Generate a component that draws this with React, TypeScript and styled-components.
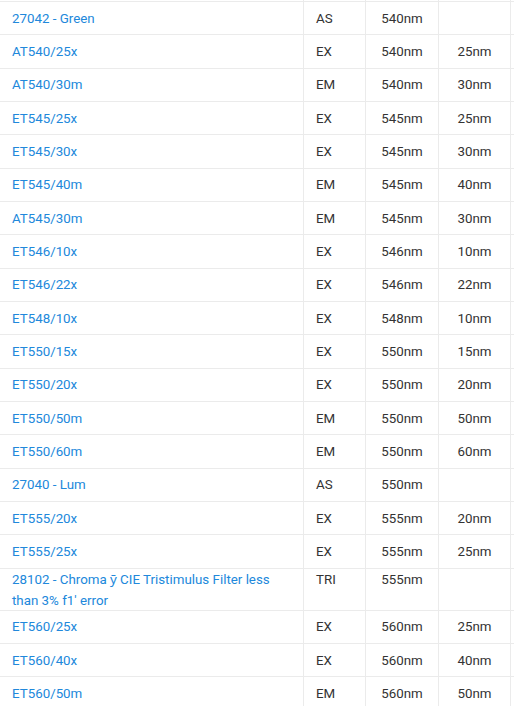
import React from "react";
import styled, { createGlobalStyle } from "styled-components";

const Global = createGlobalStyle`
  html, body { margin: 0; padding: 0; background: #fff; }
  body { font-family: Roboto, "Noto Sans", Arial, sans-serif; overflow: hidden; }
`;

const Table = styled.div`
  width: 514px;
  font-family: Roboto, "Noto Sans", Arial, sans-serif;
  font-size: 13.333px;
  line-height: 21px;
  color: #333;
`;

const Row = styled.div<{ $tall?: boolean; $stub?: boolean }>`
  display: grid;
  grid-template-columns: 304px 62px 73px 72px 1fr;
  box-sizing: border-box;
  height: ${(p) => (p.$stub ? "2px" : p.$tall ? "42px" : "33.333px")};
  border-bottom: 1px solid #ebebeb;
`;

const Cell = styled.div<{ $center?: boolean; $tall?: boolean }>`
  box-sizing: border-box;
  min-width: 0;
  display: flex;
  align-items: ${(p) => (p.$tall ? "flex-start" : "center")};
  justify-content: ${(p) => (p.$center ? "center" : "flex-start")};
  padding: ${(p) => (p.$center ? "0" : "0 12px")};
  padding-top: ${(p) => (p.$tall ? "0.5px" : "0")};
  border-right: 1px solid #ebebeb;
  white-space: ${(p) => (p.$center ? "nowrap" : "normal")};
`;

const Name = styled.a`
  color: #2188db;
  text-decoration: none;
  cursor: pointer;
`;

type Item = [string, string, string, string];

const rows: Item[] = [
  ["27042 - Green", "AS", "540nm", ""],
  ["AT540/25x", "EX", "540nm", "25nm"],
  ["AT540/30m", "EM", "540nm", "30nm"],
  ["ET545/25x", "EX", "545nm", "25nm"],
  ["ET545/30x", "EX", "545nm", "30nm"],
  ["ET545/40m", "EM", "545nm", "40nm"],
  ["AT545/30m", "EM", "545nm", "30nm"],
  ["ET546/10x", "EX", "546nm", "10nm"],
  ["ET546/22x", "EX", "546nm", "22nm"],
  ["ET548/10x", "EX", "548nm", "10nm"],
  ["ET550/15x", "EX", "550nm", "15nm"],
  ["ET550/20x", "EX", "550nm", "20nm"],
  ["ET550/50m", "EM", "550nm", "50nm"],
  ["ET550/60m", "EM", "550nm", "60nm"],
  ["27040 - Lum", "AS", "550nm", ""],
  ["ET555/20x", "EX", "555nm", "20nm"],
  ["ET555/25x", "EX", "555nm", "25nm"],
  ["28102 - Chroma ȳ CIE Tristimulus Filter less than 3% f1' error", "TRI", "555nm", ""],
  ["ET560/25x", "EX", "560nm", "25nm"],
  ["ET560/40x", "EX", "560nm", "40nm"],
  ["ET560/50m", "EM", "560nm", "50nm"],
];

export default function App() {
  return (
    <>
      <Global />
      <Table>
        <Row $stub>
          <Cell />
          <Cell />
          <Cell />
          <Cell />
          <Cell />
        </Row>
        {rows.map(([name, type, wl, bw]) => {
          const tall = name.length > 40;
          return (
            <Row key={name} $tall={tall}>
              <Cell $tall={tall}>
                <Name>{name}</Name>
              </Cell>
              <Cell $tall={tall}>{type}</Cell>
              <Cell $center $tall={tall}>{wl}</Cell>
              <Cell $center $tall={tall}>{bw}</Cell>
              <Cell $tall={tall} />
            </Row>
          );
        })}
      </Table>
    </>
  );
}
